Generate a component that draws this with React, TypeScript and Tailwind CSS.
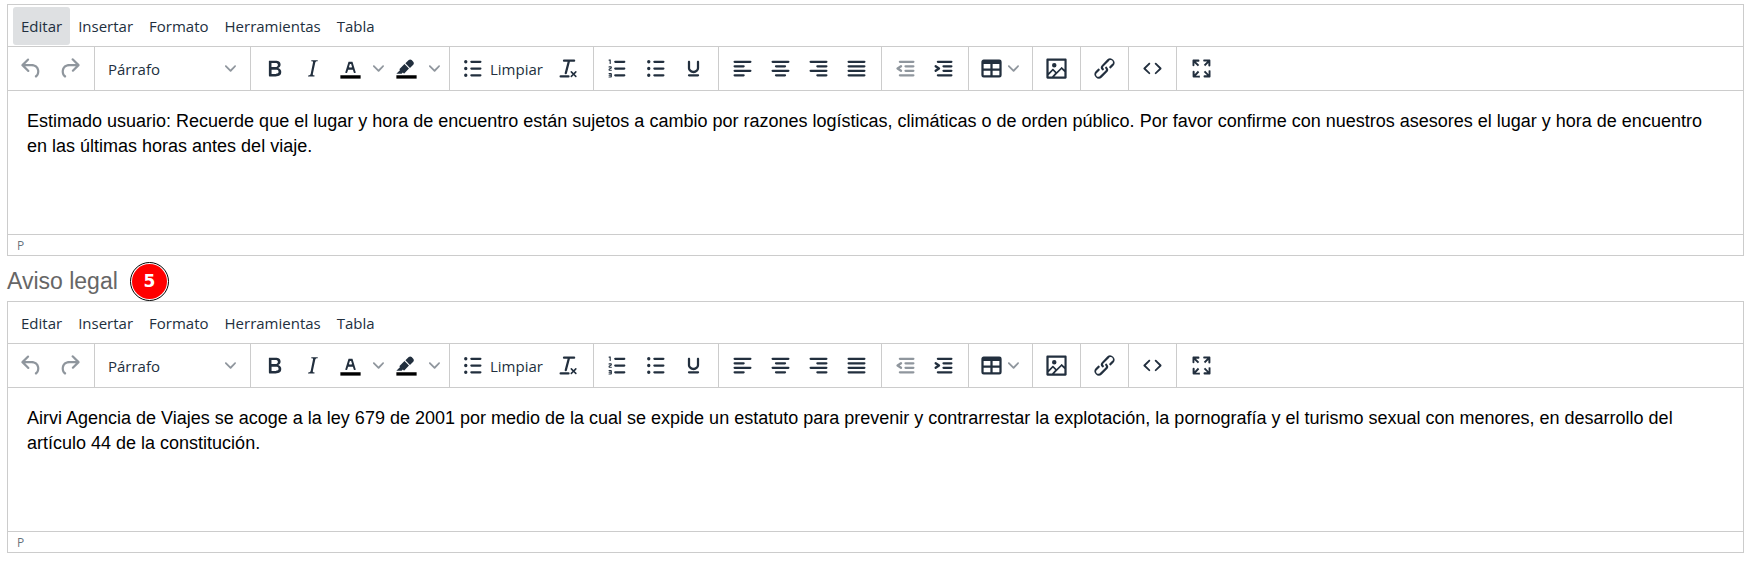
import type { ReactNode } from 'react';

const menuItems = ['Editar', 'Insertar', 'Formato', 'Herramientas', 'Tabla'];

const iconPaths = {
  undo: 'M6.4 8H12c3.7 0 6.2 2 6.8 5.1.6 2.7-.4 5.6-2.3 6.8a1 1 0 01-1-1.8c1.1-.6 1.8-2.7 1.4-4.6-.5-2.1-2.1-3.5-4.9-3.5H6.4l3.3 3.3a1 1 0 11-1.4 1.4l-5-5a1 1 0 010-1.4l5-5a1 1 0 011.4 1.4L6.4 8z',
  redo: 'M17.6 10H12c-2.8 0-4.4 1.4-4.9 3.5-.4 2 .3 4 1.4 4.6a1 1 0 11-1 1.8c-2-1.2-2.9-4.1-2.3-6.8.6-3 3-5.1 6.8-5.1h5.6l-3.3-3.3a1 1 0 111.4-1.4l5 5a1 1 0 010 1.4l-5 5a1 1 0 01-1.4-1.4l3.3-3.3z',
  bold: 'M7.8 19c-.3 0-.5 0-.6-.2l-.2-.5V5.7c0-.2 0-.4.2-.5l.6-.2h5c1.5 0 2.7.3 3.5 1 .7.6 1.1 1.4 1.1 2.5a3 3 0 01-.6 1.9c-.4.6-1 1-1.6 1.2.4.1.9.3 1.3.6s.8.7 1 1.2c.4.4.5 1 .5 1.6 0 1.3-.4 2.3-1.3 3-.8.7-2.1 1-3.8 1H7.8zm5-8.3c.6 0 1.2-.1 1.6-.5.4-.3.6-.7.6-1.3 0-1.1-.8-1.7-2.3-1.7H9.3v3.5h3.4zm.5 6c.7 0 1.3-.1 1.7-.4.4-.4.6-.9.6-1.5s-.2-1-.7-1.4c-.4-.3-1-.4-2-.4H9.4v3.8h4z',
  italic:
    'M16.7 4.7l-.1.9h-.3c-.6 0-1 0-1.4.3-.3.3-.4.6-.5 1.1l-2.1 9.8v.6c0 .5.4.8 1.4.8h.2l-.2.8H8l.2-.8h.2c1.1 0 1.8-.5 2-1.5l2-9.8.1-.5c0-.6-.4-.8-1.4-.8h-.3l.2-.9h5.8z',
  textColor:
    'M8.7 16h-.8a.5.5 0 01-.5-.6l2.7-9c.1-.3.3-.4.5-.4h2.8c.2 0 .4.1.5.4l2.7 9a.5.5 0 01-.5.6h-.8a.5.5 0 01-.4-.4l-.7-2.2c0-.3-.3-.4-.5-.4h-3.4c-.2 0-.4.1-.5.4l-.7 2.2c0 .3-.2.4-.4.4zm2.6-7.6l-.6 2a.5.5 0 00.5.6h1.6a.5.5 0 00.5-.6l-.6-2c0-.3-.3-.4-.5-.4h-.4c-.2 0-.4.1-.5.4z',
  highlight:
    'M7.7 16.7H3l3.3-3.3-.7-.8L10.2 8l4 4.1-4 4.2c-.2.2-.6.2-.8 0l-.6-.7-1.1 1.1zm5-7.5L11 7.4l3-2.9a2 2 0 012.6 0L18 6c.7.7.7 2 0 2.7l-2.9 2.9-1.8-1.8-.5-.6',
  bulletList:
    'M11 5h8a1 1 0 010 2h-8a1 1 0 010-2zm0 6h8a1 1 0 010 2h-8a1 1 0 010-2zm0 6h8a1 1 0 010 2h-8a1 1 0 010-2zM4.5 6a1.5 1.5 0 103 0 1.5 1.5 0 10-3 0zm0 6a1.5 1.5 0 103 0 1.5 1.5 0 10-3 0zm0 6a1.5 1.5 0 103 0 1.5 1.5 0 10-3 0z',
  removeFormat:
    'M13.2 6a1 1 0 010 .2l-2.6 10a1 1 0 01-1 .8h-.2a.8.8 0 01-.8-1l2.6-10H8a1 1 0 110-2h9a1 1 0 010 2h-3.8zM5 18h7a1 1 0 010 2H5a1 1 0 010-2zm13 1.5L16.5 18 15 19.5a.7.7 0 01-1-1l1.5-1.5-1.5-1.5a.7.7 0 011-1l1.5 1.5 1.5-1.5a.7.7 0 011 1L17.5 17l1.5 1.5a.7.7 0 01-1 1z',
  orderedList:
    'M10 17h8c.6 0 1 .4 1 1s-.4 1-1 1h-8a1 1 0 010-2zm0-6h8c.6 0 1 .4 1 1s-.4 1-1 1h-8a1 1 0 010-2zm0-6h8c.6 0 1 .4 1 1s-.4 1-1 1h-8a1 1 0 110-2zM6 4v3.5c0 .3-.2.5-.5.5a.5.5 0 01-.5-.5V5h-.5a.5.5 0 010-1H6zm-1 8.8l.2.2h1.3c.3 0 .5.2.5.5s-.2.5-.5.5H4.9a1 1 0 01-.9-1V13c0-.4.3-.8.6-1l1.2-.4.2-.3a.2.2 0 00-.2-.2H4.5a.5.5 0 01-.5-.5c0-.3.2-.5.5-.5h1.6c.5 0 .9.4.9 1v.1c0 .4-.3.8-.6 1l-1.2.4-.2.3zM7 17v2c0 .6-.4 1-1 1H4.5a.5.5 0 010-1h1.2c.2 0 .3-.1.3-.3 0-.2-.1-.3-.3-.3H4.4a.4.4 0 110-.8h1.3c.2 0 .3-.1.3-.3 0-.2-.1-.3-.3-.3H4.5a.5.5 0 110-1H6c.6 0 1 .4 1 1z',
  underline:
    'M16 5c.6 0 1 .4 1 1v5.5a4 4 0 01-.4 1.8l-1 1.4a5.3 5.3 0 01-5.5 1 5 5 0 01-1.6-1c-.5-.4-.8-.9-1.1-1.4a4 4 0 01-.4-1.8V6c0-.6.4-1 1-1s1 .4 1 1v5.5c0 .3 0 .6.2 1l.6.7a3.3 3.3 0 002.2.8 3.4 3.4 0 002.2-.8c.3-.2.4-.5.6-.8l.2-.9V6c0-.6.4-1 1-1zM8 17h8c.6 0 1 .4 1 1s-.4 1-1 1H8a1 1 0 010-2z',
  alignLeft:
    'M5 5h14a1 1 0 010 2H5a1 1 0 110-2zm0 4h8a1 1 0 010 2H5a1 1 0 110-2zm0 4h14a1 1 0 010 2H5a1 1 0 010-2zm0 4h8a1 1 0 010 2H5a1 1 0 010-2z',
  alignCenter:
    'M5 5h14a1 1 0 010 2H5a1 1 0 110-2zm3 4h8a1 1 0 010 2H8a1 1 0 110-2zm-3 4h14a1 1 0 010 2H5a1 1 0 010-2zm3 4h8a1 1 0 010 2H8a1 1 0 010-2z',
  alignRight:
    'M5 5h14a1 1 0 010 2H5a1 1 0 110-2zm6 4h8a1 1 0 010 2h-8a1 1 0 110-2zm-6 4h14a1 1 0 010 2H5a1 1 0 010-2zm6 4h8a1 1 0 010 2h-8a1 1 0 010-2z',
  alignJustify:
    'M5 5h14a1 1 0 010 2H5a1 1 0 110-2zm0 4h14a1 1 0 010 2H5a1 1 0 110-2zm0 4h14a1 1 0 010 2H5a1 1 0 010-2zm0 4h14a1 1 0 010 2H5a1 1 0 010-2z',
  outdent:
    'M7 5h12a1 1 0 010 2H7a1 1 0 110-2zm5 4h7a1 1 0 010 2h-7a1 1 0 010-2zm0 4h7a1 1 0 010 2h-7a1 1 0 010-2zm-5 4h12a1 1 0 010 2H7a1 1 0 010-2zm1.6-3.8a1 1 0 01-1.2 1.6l-3-2a1 1 0 010-1.6l3-2a1 1 0 011.2 1.6L6.8 12l1.8 1.2z',
  indent:
    'M7 5h12a1 1 0 010 2H7a1 1 0 110-2zm5 4h7a1 1 0 010 2h-7a1 1 0 010-2zm0 4h7a1 1 0 010 2h-7a1 1 0 010-2zm-5 4h12a1 1 0 010 2H7a1 1 0 010-2zm-2.6-3.8L6.2 12l-1.8-1.2a1 1 0 011.2-1.6l3 2a1 1 0 010 1.6l-3 2a1 1 0 11-1.2-1.6z',
  table:
    'M19 4a2 2 0 012 2v12a2 2 0 01-2 2H5a2 2 0 01-2-2V6c0-1.1.9-2 2-2h14zM5 14v4h6v-4H5zm14 0h-6v4h6v-4zm0-6h-6v4h6V8zM5 12h6V8H5v4z',
  image:
    'M5 15.7l3.3-3.2c.3-.3.7-.3 1 0L12 15l4.1-4c.3-.4.8-.4 1 0l2 1.9V5H5v10.7zM5 18V19h3l2.8-2.9-2-2L5 17.9zm14-3l-2.5-2.4-6.4 6.5H19v-4zM4 3h16c.6 0 1 .4 1 1v16c0 .6-.4 1-1 1H4a1 1 0 01-1-1V4c0-.6.4-1 1-1zm6 8a2 2 0 100-4 2 2 0 000 4z',
  link: 'M6.2 12.3a1 1 0 011.4 1.4l-2.1 2a2 2 0 102.7 2.8l4.8-4.8a1 1 0 000-1.4 1 1 0 111.4-1.3 2.9 2.9 0 010 4L9.6 20a3.9 3.9 0 01-5.5-5.5l2-2zm11.6-.6a1 1 0 01-1.4-1.4l2-2a2 2 0 10-2.6-2.8L11 10.3a1 1 0 000 1.4A1 1 0 119.6 13a2.9 2.9 0 010-4L14.4 4a3.9 3.9 0 015.5 5.5l-2 2z',
  code: 'M9.8 15.7c.3.3.3.8 0 1-.3.4-.9.4-1.2 0l-4.4-4.1a.8.8 0 010-1.2l4.4-4.2c.3-.3.9-.3 1.2 0 .3.3.3.8 0 1.1L6 12l3.8 3.7zM14.2 15.7c-.3.3-.3.8 0 1 .4.4.9.4 1.2 0l4.4-4.1c.3-.3.3-.9 0-1.2l-4.4-4.2a.8.8 0 00-1.2 0c-.3.3-.3.8 0 1.1L18 12l-3.8 3.7z',
  fullscreen:
    'M15.3 10l-1.2-1.3 2.9-3h-2.3a.9.9 0 110-1.7H19c.5 0 .9.4.9.9v4.4a.9.9 0 11-1.8 0V7l-2.9 3zm0 4l3 3v-2.3a.9.9 0 111.7 0V19c0 .5-.4.9-.9.9h-4.4a.9.9 0 110-1.8H17l-3-2.9 1.3-1.2zM10 15.4l-2.9 3h2.3a.9.9 0 110 1.7H5a.9.9 0 01-.9-.9v-4.4a.9.9 0 111.8 0V17l2.9-3 1.2 1.3zM8.7 10L5.7 7v2.3a.9.9 0 01-1.7 0V5c0-.5.4-.9.9-.9h4.4a.9.9 0 010 1.8H7l3 2.9-1.3 1.2z',
};

type IconName = keyof typeof iconPaths;

function Icon({ name, swatch = false }: { name: IconName; swatch?: boolean }) {
  return (
    <svg
      className="size-[27px] shrink-0 fill-current"
      viewBox="0 0 24 24"
      aria-hidden="true"
    >
      {swatch && <path className="fill-black" d="M3 18h18v3H3z" />}
      <path fillRule="evenodd" d={iconPaths[name]} />
    </svg>
  );
}

function Chevron() {
  return (
    <svg
      className="size-[11px] shrink-0 fill-current opacity-50"
      viewBox="0 0 10 10"
      aria-hidden="true"
    >
      <path d="M8.7 2.2c.3-.3.8-.3 1 0 .4.4.4.9 0 1.2L5.7 7.8c-.3.3-.9.3-1.2 0L.2 3.4a.8.8 0 010-1.2c.3-.3.8-.3 1.1 0L5 6l3.7-3.8z" />
    </svg>
  );
}

function ToolButton({
  icon,
  label,
  disabled = false,
}: {
  icon: IconName;
  label: string;
  disabled?: boolean;
}) {
  return (
    <button
      type="button"
      aria-label={label}
      disabled={disabled}
      className="flex h-[38px] w-[38px] items-center justify-center rounded-[3px] hover:bg-[#dee0e2] disabled:opacity-50"
    >
      <Icon name={icon} />
    </button>
  );
}

function SplitButton({ icon, label }: { icon: IconName; label: string }) {
  return (
    <div className="flex h-[38px] rounded-[3px] hover:bg-[#dee0e2]">
      <button
        type="button"
        aria-label={label}
        className="flex w-[38px] items-center justify-center"
      >
        <Icon name={icon} swatch />
      </button>
      <button
        type="button"
        aria-label={`${label}: opciones`}
        className="flex w-[18px] items-center justify-center"
      >
        <Chevron />
      </button>
    </div>
  );
}

function Group({ children }: { children: ReactNode }) {
  return (
    <div className="flex items-center border-r border-[#ccc] pr-1.5 pl-1 last:border-r-0">
      {children}
    </div>
  );
}

// Groups that hold a single icon are a fixed 48px wide
function SingleGroup({ icon, label }: { icon: IconName; label: string }) {
  return (
    <div className="flex w-12 items-center justify-center border-r border-[#ccc] last:border-r-0">
      <ToolButton icon={icon} label={label} />
    </div>
  );
}

function Toolbar() {
  return (
    <div role="toolbar" className="flex h-11 border-b border-[#ccc]">
      <Group>
        <ToolButton icon="undo" label="Deshacer" disabled />
        <ToolButton icon="redo" label="Rehacer" disabled />
      </Group>
      <Group>
        <div className="relative flex items-center">
          <select
            aria-label="Bloques"
            defaultValue="p"
            className="h-[38px] w-[145px] appearance-none rounded-[3px] bg-transparent pt-0.5 pr-6 pl-[9px] text-[15px]"
          >
            <option value="p">Párrafo</option>
          </select>
          <span className="pointer-events-none absolute right-2">
            <Chevron />
          </span>
        </div>
      </Group>
      <Group>
        <ToolButton icon="bold" label="Negrita" />
        <ToolButton icon="italic" label="Cursiva" />
        <SplitButton icon="textColor" label="Color de texto" />
        <SplitButton icon="highlight" label="Color de fondo" />
      </Group>
      <Group>
        <button
          type="button"
          className="flex h-[38px] w-[95px] items-center gap-1 rounded-[3px] pl-[5px] hover:bg-[#dee0e2]"
        >
          <Icon name="bulletList" />
          <span className="pt-0.5">Limpiar</span>
        </button>
        <ToolButton icon="removeFormat" label="Limpiar formato" />
      </Group>
      <Group>
        <ToolButton icon="orderedList" label="Lista numerada" />
        <ToolButton icon="bulletList" label="Lista de viñetas" />
        <ToolButton icon="underline" label="Subrayado" />
      </Group>
      <Group>
        <ToolButton icon="alignLeft" label="Alinear a la izquierda" />
        <ToolButton icon="alignCenter" label="Alinear al centro" />
        <ToolButton icon="alignRight" label="Alinear a la derecha" />
        <ToolButton icon="alignJustify" label="Justificar" />
      </Group>
      <Group>
        <ToolButton icon="outdent" label="Disminuir sangría" disabled />
        <ToolButton icon="indent" label="Incrementar sangría" />
      </Group>
      <Group>
        <button
          type="button"
          aria-label="Tabla"
          className="flex h-[38px] w-[53px] items-center gap-[3px] rounded-[3px] pl-[5px] hover:bg-[#dee0e2]"
        >
          <Icon name="table" />
          <Chevron />
        </button>
      </Group>
      <SingleGroup icon="image" label="Insertar imagen" />
      <SingleGroup icon="link" label="Insertar enlace" />
      <SingleGroup icon="code" label="Código fuente" />
      <SingleGroup icon="fullscreen" label="Pantalla completa" />
    </div>
  );
}

function Editor({
  label,
  text,
  activeMenu,
}: {
  label: string;
  text: string;
  activeMenu?: string;
}) {
  return (
    <div className="flex flex-col border border-[#ccc] font-['Open_Sans','Noto_Sans',sans-serif] text-[15px] text-[#222f3e]">
      <div
        role="menubar"
        className="flex h-[42px] items-center border-b border-[#ccc] px-[5px]"
      >
        {menuItems.map((item) => (
          <button
            key={item}
            type="button"
            role="menuitem"
            className={[
              'h-[38px] rounded-[3px] px-2 pt-0.5 hover:bg-[#dee0e2]',
              item === activeMenu ? 'bg-[#dee0e2]' : '',
            ].join(' ')}
          >
            {item}
          </button>
        ))}
      </div>

      <Toolbar />

      <textarea
        aria-label={label}
        defaultValue={text}
        className="h-[143px] w-full resize-none py-[18px] pr-[19px] pl-[19px] font-['Liberation_Sans',Arial,sans-serif] text-[18px] leading-[25px] text-black outline-none"
      />

      <div className="flex h-[21px] items-center border-t border-[#ccc] px-[9px] pt-0.5 text-xs text-[#222f3e]/70">
        P
      </div>
    </div>
  );
}

export default function App() {
  return (
    <main className="bg-white pt-1 pr-[15px] pb-2 pl-[7px]">
      <Editor
        label="Recomendaciones"
        activeMenu="Editar"
        text="Estimado usuario: Recuerde que el lugar y hora de encuentro están sujetos a cambio por razones logísticas, climáticas o de orden público. Por favor confirme con nuestros asesores el lugar y hora de encuentro en las últimas horas antes del viaje."
      />

      <div className="flex h-[45px] items-end gap-3">
        <h2 className="self-center pt-1.5 font-['Liberation_Sans',Arial,sans-serif] text-[23px] text-[#666]">
          Aviso legal
        </h2>
        <span className="flex size-[39px] items-center justify-center rounded-full border border-black bg-white p-px">
          <span className="flex size-full items-center justify-center rounded-full bg-[#f00] font-['DejaVu_Sans',sans-serif] text-[17px] font-bold text-white">
            5
          </span>
        </span>
      </div>

      <Editor
        label="Aviso legal"
        text="Airvi Agencia de Viajes se acoge a la ley 679 de 2001 por medio de la cual se expide un estatuto para prevenir y contrarrestar la explotación, la pornografía y el turismo sexual con menores, en desarrollo del artículo 44 de la constitución."
      />
    </main>
  );
}
